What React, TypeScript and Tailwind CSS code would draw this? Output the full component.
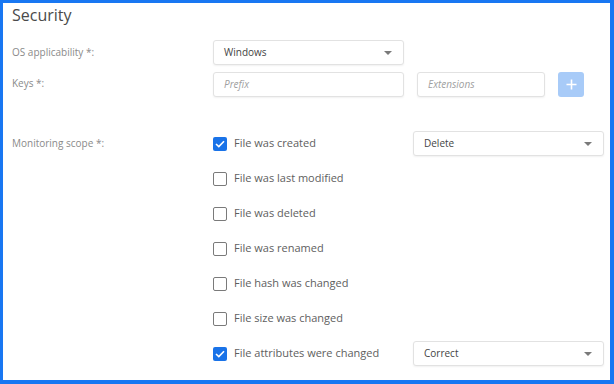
import React from "react";

const font = { fontFamily: '"Open Sans", "Noto Sans", sans-serif' };

function Caret() {
  return (
    <svg width="8" height="4" viewBox="0 0 8 4" className="shrink-0">
      <path d="M0 0 L8 0 L4 4 Z" fill="#7a7a7a" />
    </svg>
  );
}

function Select({ value }: { value: string }) {
  return (
    <div className="w-[191px] h-[25px] flex items-center justify-between pl-[10px] pr-[11px] border border-[#e2e2e2] rounded-[3px] bg-white shadow-[0_1px_2px_rgba(0,0,0,0.06)] text-[10px] text-[#444]">
      <span>{value}</span>
      <Caret />
    </div>
  );
}

function Input({ placeholder, w }: { placeholder: string; w: string }) {
  return (
    <div className={`${w} h-[25px] flex items-center pl-[10px] border border-[#e2e2e2] rounded-[3px] bg-white shadow-[0_1px_2px_rgba(0,0,0,0.06)] text-[10px] italic text-[#a0a0a0]`}>
      {placeholder}
    </div>
  );
}

function Checkbox({ checked }: { checked: boolean }) {
  if (checked) {
    return (
      <div className="w-[14px] h-[14px] rounded-[2px] bg-[#1a73e8] flex items-center justify-center shrink-0">
        <svg width="10" height="8" viewBox="0 0 10 8">
          <path d="M1 4 L3.8 6.6 L9 1.2" fill="none" stroke="white" strokeWidth="1.6" />
        </svg>
      </div>
    );
  }
  return <div className="w-[14px] h-[14px] rounded-[2px] border border-[#7a7a7a] bg-white shrink-0" />;
}

const rows: { label: string; checked: boolean; select?: string }[] = [
  { label: "File was created", checked: true, select: "Delete" },
  { label: "File was last modified", checked: false },
  { label: "File was deleted", checked: false },
  { label: "File was renamed", checked: false },
  { label: "File hash was changed", checked: false },
  { label: "File size was changed", checked: false },
  { label: "File attributes were changed", checked: true, select: "Correct" },
];

export default function App() {
  return (
    <div style={font} className="w-[614px] h-[384px] bg-white border-l-[3px] border-t-[3px] border-r-[4px] border-b-[4px] border-[#1877f2] pl-[9px] pt-[2px]">
      <div className="text-[16px] leading-[20px] text-[#4a4a4a]">Security</div>
      <div className="mt-[15px] flex items-center h-[25px]">
        <div className="w-[201px] text-[10px] text-[#8a8a8a]">OS applicability *:</div>
        <Select value="Windows" />
      </div>
      <div className="mt-[7px] flex items-center h-[25px]">
        <div className="w-[201px] text-[10px] text-[#8a8a8a] -mt-[2px]">Keys *:</div>
        <Input placeholder="Prefix" w="w-[191px]" />
        <div className="w-[13px]" />
        <Input placeholder="Extensions" w="w-[128px]" />
        <div className="w-[13px]" />
        <div className="w-[26px] h-[25px] rounded-[3px] bg-[#a8cbf8] flex items-center justify-center">
          <svg width="11" height="11" viewBox="0 0 11 11">
            <path d="M5.5 0.5 V10.5 M0.5 5.5 H10.5" stroke="white" strokeWidth="1.6" />
          </svg>
        </div>
      </div>
      <div className="mt-[29px] flex">
        <div className="w-[201px] h-[35px] flex items-center text-[10px] text-[#8a8a8a]">Monitoring scope *:</div>
        <div className="flex flex-col">
          {rows.map((r) => (
            <div key={r.label} className="h-[35px] flex items-center">
              <div className="w-[200px] flex items-center gap-[7px]">
                <Checkbox checked={r.checked} />
                <span className="text-[11px] text-[#5e5e5e]">{r.label}</span>
              </div>
              {r.select && <Select value={r.select} />}
            </div>
          ))}
        </div>
      </div>
    </div>
  );
}
